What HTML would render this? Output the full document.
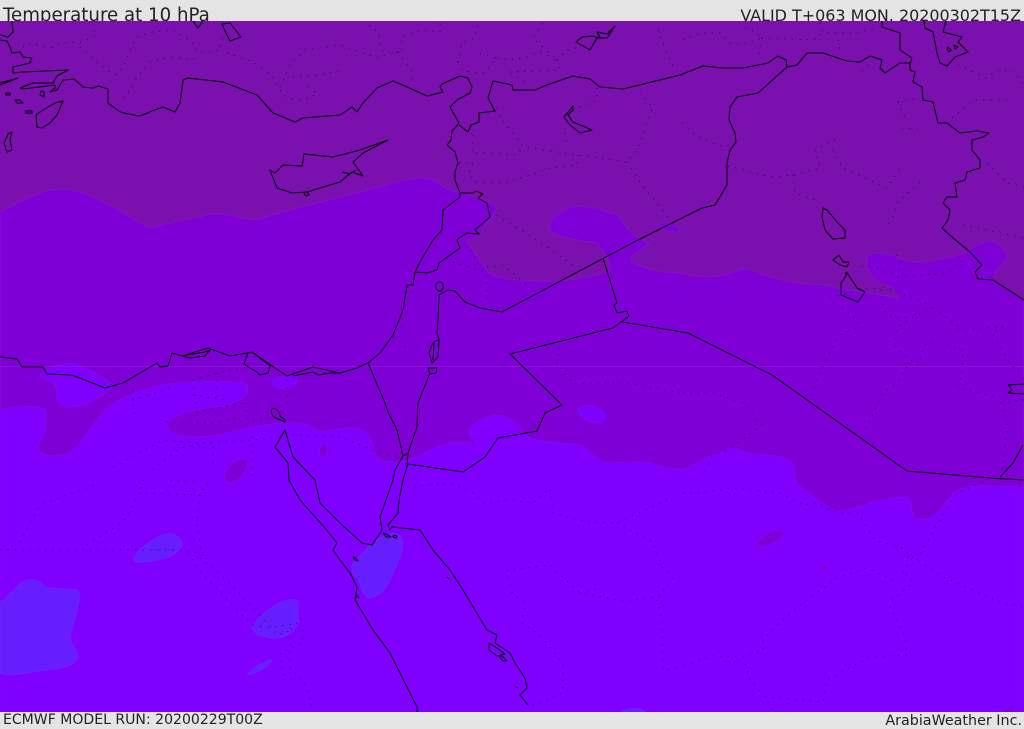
<!DOCTYPE html>
<html><head><meta charset="utf-8"><title>Temperature at 10 hPa</title>
<style>
html,body{margin:0;padding:0;background:#e4e4e4}
body{width:1024px;height:729px;position:relative;overflow:hidden;font-family:"DejaVu Sans",sans-serif;color:#222}
.t{position:absolute;white-space:nowrap;line-height:1}
svg{position:absolute;left:0;top:21px}
</style></head><body>
<div class="t" style="left:3px;top:6.500px;font-size:18.200px">Temperature at 10 hPa</div>
<div class="t" style="right:3px;top:7.500px;font-size:15.950px">VALID T+063 MON. 20200302T15Z</div>
<div class="t" style="left:3px;top:713px;font-size:14.050px">ECMWF MODEL RUN: 20200229T00Z</div>
<div class="t" style="right:2px;top:713.500px;font-size:14.300px">ArabiaWeather Inc.</div>
<svg width="1024" height="691" viewBox="0 21 1024 691" xmlns="http://www.w3.org/2000/svg">
<rect x="0" y="21" width="1024" height="692" fill="#7a10ad"/>
<!-- mid band -->
<g fill="#7e00d6" stroke="#8a1cc8" stroke-width=".6" stroke-linejoin="round">
<path d="M0 212C25 198 45 189 62 189C85 189 112 206 150 228C170 223 185 219 200 217C220 209 232 217 255 220C290 209 340 198 400 181C420 176 432 176 445 188C458 194 480 196 497 207C495 216 484 225 473 240L465 240C473 250 480 258 488 272C500 280 520 281 547 281C570 282 590 277 607 272C612 268 611 262 597 243C580 240 555 238 550 230C546 222 555 214 573 206C590 206 607 210 620 217C624 225 630 236 650 244C640 250 628 256 632 261C640 268 660 273 680 273C700 279 720 278 745 268C765 274 780 284 825 285C850 292 870 293 895 297L898 300C899 290 890 285 880 283C870 277 863 265 868 255C875 251 885 252 900 258C915 265 935 261 960 255C975 246 985 240 992 241C1003 246 1010 255 1005 262C997 268 992 276 994 280C1003 288 1015 294 1024 300L1024 713L0 713Z"/>
<path d="M657 226C662 220 672 222 680 229L678 232C668 232 660 230 657 226Z"/>
</g>
<path d="M1024 258C1010 262 998 272 995 280L1024 300Z" fill="#7a10ad"/>
<!-- bright -->
<g fill="#7f00ff" stroke="#8a10e8" stroke-width=".6" stroke-linejoin="round">
<path d="M0 410C15 406 35 405 45 409C48 420 47 432 38 445C36 452 44 456 55 456C70 455 78 447 90 430C102 412 112 402 130 395C150 388 155 384 190 382C215 381 240 380 247 385C250 392 246 400 222 406C200 409 175 413 168 422C164 430 172 436 195 437C220 437 240 428 265 425C285 422 305 420 320 432C330 431 340 427 357 428C368 431 373 440 375 453C377 460 385 463 400 462C415 460 430 448 450 443C462 441 472 444 477 443C470 436 467 432 470 428C477 420 490 415 500 415C515 419 520 428 527 437C545 443 565 443 580 445C590 449 595 459 603 462C615 464 630 461 645 462C660 465 672 470 682 470C695 466 705 456 720 453C726 449 730 447 733 447C742 452 750 455 765 455C780 455 788 458 792 463C796 470 794 478 797 483C808 494 825 506 837 512C855 509 885 496 908 497C914 502 910 514 915 518C925 522 930 518 937 513C945 505 950 494 958 490C970 484 990 486 1024 487L1024 713L0 713Z"/>
<path d="M40 375C47 367 60 364 70 363C80 364 88 370 95 373C102 378 110 382 113 387C105 394 96 399 85 405C72 408 62 408 58 403C56 397 58 390 55 385C52 381 43 380 40 375Z"/>
<path d="M272 382C275 377 288 374 296 377C299 380 297 387 286 388C278 389 272 386 272 382Z"/>
<path d="M578 409C580 404 592 404 600 409C607 414 608 421 598 423C590 423 578 417 578 409Z"/>
</g>
<!-- mid blobs in bright -->
<g fill="#7e00d6" stroke="#8a10e8" stroke-width=".6">
<path d="M224 476C228 463 238 458 245 459C250 463 246 472 240 478C234 484 224 486 224 476Z"/>
<ellipse cx="323.500" cy="451" rx="4.500" ry="6"/>
<path d="M756 545C760 536 772 529 782 531C785 536 775 544 765 546C760 547 756 547 756 545Z"/>
<path d="M820 570C822 566 826 563 829 565C828 568 824 571 820 570Z"/>
<path d="M1000 712C1005 708 1012 705 1014 708L1014 713Z"/>
</g>
<!-- blue blobs -->
<g fill="#661eff" stroke="#7030ff" stroke-width=".6" stroke-linejoin="round">
<path d="M0 603C8 596 14 590 20 584C27 578 36 578 42 584C46 590 60 588 77 590C80 592 80 597 78 605C76 618 72 628 70 637C71 645 78 650 78 657C75 664 68 667 55 669C35 671 20 675 7 675L0 673Z"/>
<path d="M134 558C140 548 150 541 158 537C170 531 180 534 182 545C180 552 170 558 153 561C145 562 132 564 134 558Z"/>
<path d="M252 627C258 618 268 609 280 603C290 598 298 598 298 604L298 623C294 632 285 638 276 638C266 638 252 634 252 627Z"/>
<path d="M247 675C252 668 262 662 272 660C268 667 258 673 247 675Z"/>
<path d="M352 565C358 558 368 546 380 538C390 532 400 532 402 540C405 552 396 565 392 575C388 588 378 598 368 598C362 595 361 585 358 579C353 575 351 570 352 565Z"/>
<path d="M622 712C628 707 640 707 645 712Z"/>
</g>
<path d="M0 366.500H1024" stroke="#9a30dc" stroke-width="1" opacity=".45"/>
<!-- dotted -->
<g fill="none" stroke="#000" stroke-width="1" stroke-dasharray="1 6.500" opacity=".7">
<path d="M23 47L28 43L50 48L62 43L82 42L97 35L92 27"/>
<path d="M80 47L97 62L107 70L115 75L123 68L130 50L137 37L153 32L173 30L192 42L198 53L220 50L222 38"/>
<path d="M123 98L132 88L137 77L150 62L170 57L193 60L198 53"/>
<path d="M227 53L253 62L273 77L283 95L295 100L310 98L317 93L308 87"/>
<path d="M280 87L290 65L305 50L340 45L377 58L398 52L383 52L378 32L368 25"/>
<path d="M293 77L320 75L343 70"/>
<path d="M402 50L402 37L422 30L440 32L440 23M398 52L412 72L412 83"/>
<path d="M458 62L462 43L475 38L478 23M458 62L463 71L483 73L497 58L477 53M497 58L515 60L540 52L557 60L533 38L543 23M557 60L560 70L507 72L527 83"/>
<path d="M557 60L567 50L580 47M658 30L667 53L675 70"/>
<path d="M497 108L500 118L515 135L523 147L578 155L627 162L637 150L653 107L640 93"/>
<path d="M578 155L577 165L550 168L510 182L477 182L468 175L473 163L458 163"/>
<path d="M473 135L472 153L487 153L517 155L523 147"/>
<path d="M627 162L640 182L668 217"/>
<path d="M497 215L537 240L577 268M487 267L503 265L533 290M470 250L487 277L487 303M453 262L487 273M407 287L420 300M393 337L407 348M402 318L402 328"/>
<path d="M573 110L597 100L597 88M565 133L567 147"/>
<path d="M683 40L700 33L720 33L730 43L740 45L762 38L757 33L740 25M762 38L758 57M762 38L813 40L823 33L857 33L877 28M820 23L823 33M838 40L840 52M862 71L873 60"/>
<path d="M682 123L700 138L720 146L733 145"/>
<path d="M728 166L770 177L793 175L820 168L815 150L837 138M793 175L795 193L815 200"/>
<path d="M833 150L843 168L887 188L900 168M920 182L897 203L895 213L887 227"/>
<path d="M898 102L920 98M898 102L907 123M902 129L920 128M952 118L975 100L1013 100"/>
<path d="M958 65L987 78L998 70L1015 72L1024 86M987 163L1007 183L1024 187M963 225L1024 238"/>
<path d="M830 298L858 290L880 288L885 312L893 318L913 317L932 308L957 325L960 330"/>
<path d="M862 266L880 268L898 277L900 262L897 255M898 277L947 273L967 257M883 287L923 302L932 308"/>
<path d="M842 308L858 320L858 327L840 335L823 365L810 397"/>
<path d="M913 317L897 327L895 347L907 358L918 365L925 345L933 342L963 350L962 373L958 388L997 397"/>
<path d="M907 367L897 383L883 393L863 435"/>
<path d="M958 330L997 327L1003 327L992 333L1010 363L1024 380M1000 403L1008 422L1002 473M1024 400L1000 403"/>
<path d="M683 393L713 393L743 403L762 425L732 447L712 457L702 477"/>
<path d="M560 347L557 363L573 384L623 382L680 393"/>
<path d="M683 493L698 493L733 488L780 493L803 505L817 503L837 513L858 513L875 540L902 548L917 560L943 577L1000 602L1024 607"/>
<path d="M917 560L937 525L957 493L987 480M902 548L912 558L902 573"/>
<path d="M893 580L867 568L837 578L803 603L780 622L763 640L763 650L743 657L713 656L680 667"/>
<path d="M743 657L750 680L765 697L772 710M765 697L780 698L823 702L827 680L870 657L907 655L905 637L890 607L892 600L913 583L902 570"/>
<path d="M407 487L450 483L473 493L483 503L507 500L533 503L550 488L553 513L587 522L617 523L673 497M617 523L653 542L662 567L673 578L658 597L623 601L580 593L550 565L507 570"/>
<path d="M507 570L512 593L525 603L522 623L540 635L563 663L563 693L532 706M657 600L662 620L663 670L680 668M580 593L600 588"/>
<path d="M0 550L180 550L202 553M20 542L37 510L45 503L100 483M87 545L123 522L140 493L200 495L210 480M200 495L197 523L202 557M143 480L140 493M163 480L200 482"/>
<path d="M188 553L203 575L237 610L252 625L270 628L297 623L290 630M200 558L230 583L248 603L267 623L277 635L293 630"/>
<path d="M303 630L302 643L280 653L282 673L293 680M290 637L290 667L307 687L312 707"/>
<path d="M133 383L133 410L137 418M133 400L173 387M193 380L197 410M217 373L217 403M193 380L217 373L247 367M245 403L248 420L283 418M197 412L243 403M193 395L227 400M167 422L213 423L240 418"/>
<path d="M113 467L163 440L203 443L253 440L297 435L340 437L373 450L400 457M153 470L180 448L203 443M213 447L213 467M252 437L252 480M287 380L288 417"/>
</g>
<!-- coast and borders -->
<g fill="none" stroke="#000" stroke-width="1" stroke-linejoin="round">
<path d="M12 21L13 32L8 37L0 35M0 40L7 41L10 47L12 53L20 52L23 57L32 58L30 63L13 67L13 73L22 72L68 70L57 76L53 83L33 83L20 88L23 89L55 85L55 88L50 92L57 90L63 80L74 79L83 87L93 88L98 86L108 89L108 103L120 112L133 115L140 116L152 111L163 107L175 112L180 103L183 80L188 78L223 82L257 95L273 113L295 122L303 118L340 115L352 107L357 112L363 103L377 88L393 81L405 86L427 96L443 92L440 87L442 84L460 76L468 78L472 87L470 93L457 100L450 107L459 123L455 128L452 131L451 140L447 145L455 152L458 163L455 172L455 180L460 193L460 197L443 210L442 230L433 240L420 262L415 272L413 285L407 285L403 310L393 335L380 353L368 363L357 368L340 373L313 367L287 376L272 366L252 352L247 353L230 356L208 348L182 356L172 353L168 366L160 367L157 363L123 383L105 388L72 375L47 374L43 367L22 367L17 359L0 357"/>
<path d="M0 83L18 78L8 82L0 85ZM6 93l4 0l0 2l-4 0ZM15 100l5 0l3 3l-6 0ZM26 111l6 0l0 2l-6 0ZM41 91l3 1l0 5l-4-2Z"/>
<path d="M63 101L55 103L43 110L36 115L37 127L42 128L50 123L57 115Z"/>
<path d="M12 132L8 134L4 143L7 152L12 150L10 140Z"/>
<path d="M193 21L198 28L203 21M222 24L230 23L241 37L230 41L226 33Z"/>
<path d="M304 154L333 157L360 150L388 140L363 153L353 162L363 176L352 172L340 182L320 188L307 192L292 193L277 188L270 170L275 173L283 165L302 166Z"/>
<path d="M342 172l8 2l6-4M303 192l3 4l3-1l-2-4"/>
<path d="M459 125L468 132L471 125L479 122L479 113L495 111L488 98L493 81L512 85L513 90L535 90L547 85L573 76L590 79L600 87L623 89L680 75L703 66L723 68L743 68L768 63L778 56L786 60L787 67L797 65L807 53L823 53L847 61L860 62L870 56L882 60L880 68L885 73L900 63L910 63L910 70L915 72L913 82L922 87L923 100L933 102L938 123L947 123L960 133L977 131L989 133L983 137L972 140L972 150L980 160L980 168L967 172L965 180L955 183L957 197L947 197L943 203L950 210L948 220L942 228L953 238L970 252L982 265L975 272L978 279L993 280L1024 300"/>
<path d="M882 21L882 27L900 33L900 50L912 58L910 63"/>
<path d="M924 21L925 28L933 32L937 53L940 63L947 66L955 57L968 52L958 42L962 37L943 32L946 21M948 47l3 3l-2 2l-2-3ZM954 45l4 2l-3 2Z"/>
<path d="M787 67L758 93L737 97L730 107L729 120L735 133L736 142L730 150L727 163L727 185L715 205L702 208L680 219L638 240L502 312L480 308L465 302L455 291L448 290L439 295L438 320L437 333L439 340"/>
<path d="M415 272L427 273L437 270L439 263L460 248L457 240L459 238L467 233L479 234L475 230L490 217L487 203L478 198L483 194L476 191L473 193L461 193"/>
<path d="M436 284C438 281 442 281 443 285C444 289 441 292 439 291C436 290 435 287 436 284Z"/>
<path d="M435 341L439 340L438 357L432 363L429 353L432 345ZM434 343L433 360M428 368L437 368L436 373L430 374Z"/>
<path d="M430 373L418 403L417 427L408 453"/>
<path d="M368 363L385 403L388 412L397 430L403 456L408 453L407 467L403 480L399 500L398 513L388 525L390 530L392 527L420 530L433 550L450 570L463 590L487 630L497 635L495 643L510 653L515 663L525 678L527 688L520 695L528 705"/>
<path d="M403 456L395 470L393 480L380 517L382 530L372 545L362 543L340 523L320 503L315 480L293 457L285 430L275 447L288 463L289 480L300 500L325 528L337 543L333 550L340 560L350 573L357 587L355 600L373 630L390 653L407 687L417 707L417 712"/>
<path d="M272 409C276 407 280 412 280 416L285 420L285 422L278 419C272 417 270 412 272 409Z"/>
<path d="M408 464L463 472L485 457L498 438L537 431L545 413L562 405L510 354L613 328L629 316L627 311L617 313L614 305L617 303L603 258"/>
<path d="M622 322L688 333L772 375L907 471L990 478L1024 480M1000 477L1013 463L1023 445"/>
<path d="M182 356L205 352L210 350L205 356L190 358ZM244 364L248 353L252 352L270 366L268 373L260 375L257 372L250 368ZM293 376L313 372L318 375L330 373L340 373M160 367L168 366"/>
<path d="M353 557l3 1l2 3l-3-1ZM383 533l5 2l3 2l-5 0ZM394 535l3 1l-1 2l-3-1ZM489 643l8 5l8 6l-8 2l-8-6ZM499 656l4 5l4 0l-5-5ZM447 577l2 2ZM516 687l2 1Z"/>
<path d="M355 600l2-5l2 3"/>
<path d="M573 106L564 117L570 125L580 133L592 130L585 127L573 122L568 115L573 110Z"/>
<path d="M576 42L590 50L597 38L607 38L615 26L607 34L597 32L600 38L592 36L582 37Z"/>
<path d="M823 208L822 217L825 230L833 239L845 238L845 230L837 222L827 210Z"/>
<path d="M833 260L839 255L843 262L849 262L847 267L840 265Z"/>
<path d="M846 272L846 276L841 283L841 295L853 300L858 302L865 292L857 288L850 277Z"/>
<path d="M1008 385L1024 384M1008 385L1012 390L1008 393L1024 394"/>
</g>
</svg>
</body></html>
